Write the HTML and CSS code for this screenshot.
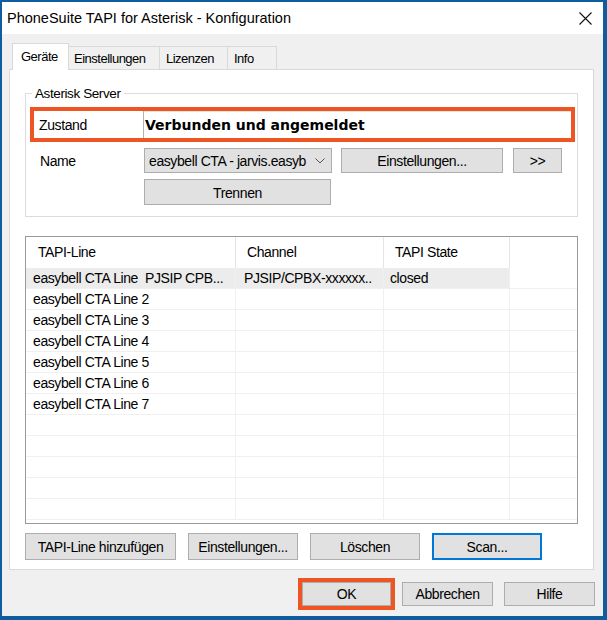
FILE: index.html
```html
<!DOCTYPE html>
<html lang="de">
<head>
    <meta charset="UTF-8">
    <title>PhoneSuite TAPI for Asterisk - Konfiguration</title>
    <link rel="stylesheet" href="styles.css">
</head>
<body>
<div class="window">
    <!-- Titelleiste -->
    <div class="titlebar">
        <span class="title">PhoneSuite TAPI for Asterisk - Konfiguration</span>
        <svg class="close" width="13" height="13" viewBox="0 0 13 13">
            <path d="M0.5 0.5 L12.5 12.5 M12.5 0.5 L0.5 12.5" stroke="#111" stroke-width="1.1" fill="none"/>
        </svg>
    </div>

    <div class="client">
        <div class="tabs">
            <div class="tab active">Geräte</div>
            <div class="tab w-einst">Einstellungen</div>
            <div class="tab w-liz">Lizenzen</div>
            <div class="tab w-info">Info</div>
        </div>

        <div class="panel">
            <fieldset class="group">
                <legend>Asterisk Server</legend>
                <div class="state">
                    <span class="state-label">Zustand</span>
                    <span class="state-value">Verbunden und angemeldet</span>
                </div>
                <div class="name-row">
                    <span class="name-label">Name</span>
                    <div class="combo">
                        <span class="combo-text">easybell CTA - jarvis.easyb</span>
                        <svg class="chevron" width="10" height="6" viewBox="0 0 10 6">
                            <path d="M0.5 0.5 L5 5 L9.5 0.5" stroke="#555" stroke-width="1" fill="none"/>
                        </svg>
                    </div>
                    <button class="btn btn-settings">Einstellungen...</button>
                    <button class="btn btn-more">&gt;&gt;</button>
                </div>
                <div class="trenn-row">
                    <button class="btn btn-trennen">Trennen</button>
                </div>
            </fieldset>

            <div class="list">
                <div class="row head">
                    <div class="cell c1">TAPI-Line</div>
                    <div class="cell c2">Channel</div>
                    <div class="cell c3">TAPI State</div>
                    <div class="cell c4"></div>
                </div>
                <div id="rows"></div>
            </div>

            <div class="actions">
                <button class="btn btn-add">TAPI-Line hinzufügen</button>
                <button class="btn btn-act">Einstellungen...</button>
                <button class="btn btn-act">Löschen</button>
                <button class="btn btn-act focused">Scan...</button>
            </div>
        </div>

        <div class="dialog-buttons">
            <button class="btn btn-dlg marked">OK</button>
            <button class="btn btn-dlg">Abbrechen</button>
            <button class="btn btn-dlg">Hilfe</button>
        </div>
    </div>
</div>
<script>
    // Zeilen der Liste erzeugen
    var lines = [
        ['easybell CTA Line&nbsp; PJSIP CPB...', 'PJSIP/CPBX-xxxxxx..', 'closed'],
        ['easybell CTA Line 2', '', ''],
        ['easybell CTA Line 3', '', ''],
        ['easybell CTA Line 4', '', ''],
        ['easybell CTA Line 5', '', ''],
        ['easybell CTA Line 6', '', ''],
        ['easybell CTA Line 7', '', '']
    ];
    var box = document.getElementById('rows');
    for (var i = 0; i < 12; i++) {
        var d = lines[i] || ['', '', ''];
        var row = document.createElement('div');
        row.className = i === 0 ? 'row selected' : 'row';
        row.innerHTML = '<div class="cell c1">' + d[0] + '</div>'
            + '<div class="cell c2">' + d[1] + '</div>'
            + '<div class="cell c3">' + d[2] + '</div>'
            + '<div class="cell c4"></div>';
        box.appendChild(row);
    }
</script>
</body>
</html>
```

FILE: styles.css
```css
*{
    margin: 0;
    padding: 0;
    box-sizing: border-box;
}
body{
    background: #0f5c9f;
    height: 620px;
    overflow: hidden;
    font-family: "Liberation Sans", Arial, sans-serif;
    color: #000;
}
.window{
    margin: 2px 4px 0 2px;
    height: 614px;
    background: #f0f0f0;
    display: flex;
    flex-direction: column;
}
.titlebar{
    height: 32px;
    background: #fff;
    display: flex;
    align-items: center;
    justify-content: space-between;
    padding: 0 11px 0 5px;
}
.title{
    font-size: 14.5px;
    color: #000;
}
.close{
    display: block;
}
.client{
    flex: 1;
    padding: 9px 9px 0 7px;
    display: flex;
    flex-direction: column;
}

/* Reiter */
.tabs{
    display: flex;
    align-items: flex-end;
    height: 26px;
    margin-left: 3px;
    font-size: 13px;
    letter-spacing: -0.5px;
}
.tab{
    height: 23px;
    line-height: 23px;
    border: 1px solid #d9d9d9;
    border-bottom: none;
    border-left: none;
    background: #f0f0f0;
    padding-left: 5px;
}
.tab.active{
    height: 27px;
    line-height: 26px;
    width: 57px;
    padding-left: 8px;
    border-left: 1px solid #d9d9d9;
    background: #fff;
    margin-bottom: -1px;
    position: relative;
    z-index: 1;
}
.w-einst{ width: 91px; }
.w-liz{ width: 68px; padding-left: 6px; }
.w-info{ width: 49px; padding-left: 6px; }

.panel{
    height: 501px;
    background: #fff;
    border: 1px solid #d9d9d9;
    display: flex;
    flex-direction: column;
}

/* Gruppe Asterisk Server */
.group{
    margin: 16px 15px 0 15px;
    border: 1px solid #dcdcdc;
    padding: 0 2px 11px 4px;
    font-size: 14px;
    letter-spacing: -0.4px;
}
.group legend{
    margin-left: 2px;
    padding: 0 3px;
    line-height: 15px;
    font-size: 13.5px;
}
.state{
    margin-top: 6px;
    height: 35px;
    border: 4px solid #ee5523;
    display: flex;
    align-items: stretch;
    background: #fff;
}
.state-label{
    width: 110px;
    padding-left: 5px;
    line-height: 28px;
    border-right: 1px solid #b4b4b4;
}
.state-value{
    flex: 1;
    padding-left: 1px;
    line-height: 27px;
    font-family: "DejaVu Sans", Verdana, sans-serif;
    font-weight: bold;
    font-size: 14px;
    letter-spacing: 0;
    border-top: 1px solid #e4e4e4;
}
.name-row{
    margin-top: 6px;
    display: flex;
    align-items: center;
    height: 25px;
}
.name-label{
    width: 114px;
    padding-left: 10px;
}
.combo{
    width: 188px;
    height: 25px;
    background: #e1e1e1;
    border: 1px solid #adadad;
    display: flex;
    align-items: center;
    padding: 0 6px 0 4px;
    overflow: hidden;
}
.combo-text{
    flex: 1;
    white-space: nowrap;
    margin-right: 4px;
}
.chevron{
    flex: none;
}
.btn{
    font-family: "Liberation Sans", Arial, sans-serif;
    font-size: 14px;
    letter-spacing: -0.4px;
    color: #000;
    background: #e1e1e1;
    border: 1px solid #adadad;
    height: 25px;
}
.btn-settings{
    width: 162px;
    margin-left: 9px;
}
.btn-more{
    width: 49px;
    margin-left: 10px;
}
.trenn-row{
    margin-top: 6px;
    padding-left: 114px;
}
.btn-trennen{
    width: 187px;
    height: 26px;
    padding-top: 2px;
}

/* Liste */
.list{
    margin: 19px 15px 0 15px;
    height: 288px;
    border: 1px solid #9a9a9a;
    overflow: hidden;
    font-size: 14px;
    letter-spacing: -0.4px;
}
.row{
    display: grid;
    grid-template-columns: 210px 148px 126px 1fr;
    height: 21px;
}
.row .cell{
    border-right: 1px solid #f0f0f0;
    border-bottom: 1px solid #f0f0f0;
    line-height: 21px;
    white-space: nowrap;
    overflow: hidden;
}
.row .c4{
    border-right: none;
}
.row.head{
    height: 31px;
}
.row.head .cell{
    line-height: 31px;
    border-bottom: none;
    border-right-color: #e5e5e5;
    padding-left: 11px;
}
.row.head .c1{
    padding-left: 12px;
}
.row.head .c4{
    border-right: none;
}
.row .c1{ padding-left: 7px; }
.row .c2{ padding-left: 8px; }
.row .c3{ padding-left: 6px; }
.row.selected .c1,
.row.selected .c2,
.row.selected .c3{
    background: #ececec;
}

/* Knöpfe unten */
.actions{
    margin: 9px 0 0 15px;
    display: flex;
    gap: 12px;
}
.actions .btn{
    height: 27px;
}
.btn-add{
    width: 151px;
}
.btn-act{
    width: 110px;
}
.btn.focused{
    border: 2px solid #0078d7;
}
.dialog-buttons{
    margin: 12px -1px 0 0;
    display: flex;
    justify-content: flex-end;
    gap: 11px;
}
.btn-dlg{
    width: 91px;
    height: 24px;
}
.btn-dlg.marked{
    width: 89px;
    outline: 4px solid #ee5523;
}
```
